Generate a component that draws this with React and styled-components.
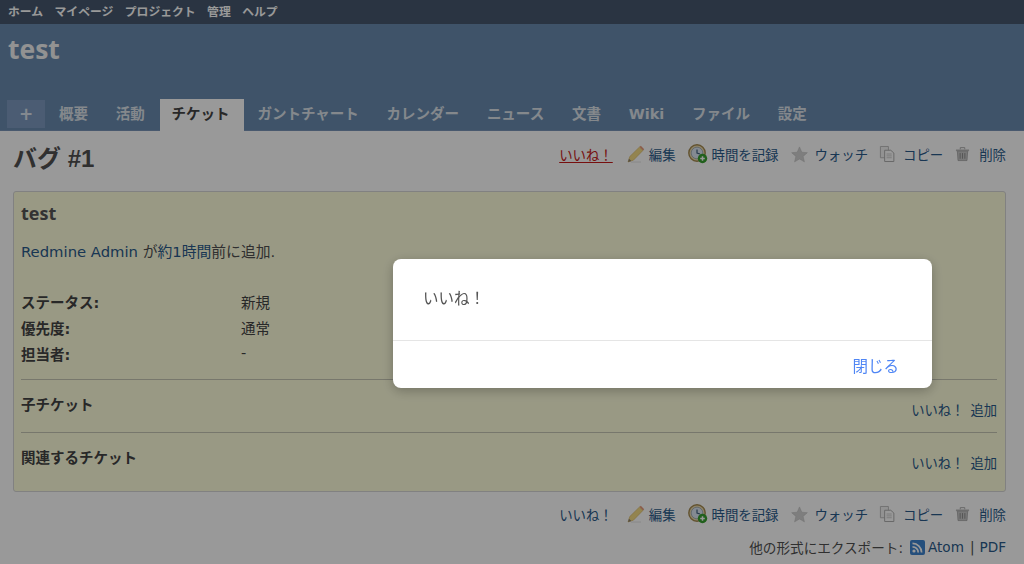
import React from "react";
import styled, { createGlobalStyle } from "styled-components";

const FONT = `"DejaVu Sans", "Noto Sans CJK JP", sans-serif`;

const Global = createGlobalStyle`
  html, body { margin: 0; padding: 0; height: 100%; overflow: hidden; background: #fff; }
  body { font-family: ${FONT}; color: #333; font-size: 13px; }
  * { box-sizing: border-box; }
`;

const Page = styled.div`
  width: 1024px;
  height: 564px;
  overflow: hidden;
  display: flex;
  flex-direction: column;
`;
const TopMenu = styled.nav`
  height: 24px;
  flex: none;
  background: #46586f;
  display: flex;
  align-items: center;
  gap: 11.5px;
  padding: 0 8px 4px;
  font-size: 11.8px;
  font-weight: 700;
  color: #fff;
`;
const Header = styled.header`
  height: 107px;
  flex: none;
  background: #6a8bb0;
  display: flex;
  flex-direction: column;
  justify-content: space-between;
  padding: 9px 0 0 7px;
  box-shadow: inset 0 -1px 0 #7b95b8;
`;
const Title = styled.h1`
  margin: 0 0 0 1px;
  font-family: "Open Sans", sans-serif;
  font-size: 26.5px;
  line-height: 33px;
  font-weight: 700;
  color: #f3f3f3;
`;
const Tabs = styled.div`
  display: flex;
  align-items: flex-end;
  height: 32px;
`;
const PlusTab = styled.div`
  width: 38px;
  height: 28px;
  margin-bottom: 3px;
  background: #7d9ac0;
  color: #dce4ee;
  font-size: 17px;
  font-weight: 700;
  display: flex;
  align-items: center;
  justify-content: center;
`;
const Tab = styled.div`
  height: 32px;
  padding: ${(p) => (p.$active ? "0 14px 2px 12px" : "0 13.9px 2px")};
  margin-left: ${(p) => (p.$active ? "1px" : "0")};
  display: flex;
  align-items: center;
  font-size: 14.5px;
  line-height: 20px;
  font-weight: 700;
  background: ${(p) => (p.$active ? "#fff" : "transparent")};
  color: ${(p) => (p.$active ? "#444" : "#dde3ea")};
`;
const Content = styled.main`
  flex: 1;
  min-height: 0;
  padding: 0 18px 0 13px;
  background: #fff;
`;
const TitleRow = styled.div`
  height: 60px;
  display: flex;
  justify-content: space-between;
  align-items: flex-start;
  padding-top: 11px;
`;
const Heading = styled.h2`
  margin: 2px 0 0;
  font-size: 24px;
  line-height: 30px;
  font-weight: 700;
  color: #505050;
  font-family: "Liberation Sans", "Noto Sans CJK JP", sans-serif;
`;
const Actions = styled.div`
  display: flex;
  align-items: center;
  height: 24px;
  font-size: 13.4px;
  color: #2a5a8a;
`;
const Action = styled.span`
  display: inline-flex;
  align-items: center;
  margin-left: ${(p) => p.$gap}px;
  white-space: nowrap;
  svg { margin-right: ${(p) => p.$icon}px; flex: none; }
`;
const Like = styled.span`
  color: ${(p) => (p.$on ? "#c61a1a" : "#2a5a8a")};
  text-decoration: ${(p) => (p.$on ? "underline" : "none")};
  text-underline-offset: 2px;
`;
const Issue = styled.section`
  height: 301px;
  background: #ffd;
  border: 1px solid #d7d7d7;
  border-radius: 3px;
  padding: 0 8px 0 7px;
  display: flex;
  flex-direction: column;
`;
const Subject = styled.h3`
  margin: 9px 0 0;
  font-family: "Open Sans", sans-serif;
  font-size: 18px;
  line-height: 24px;
  font-weight: 700;
  color: #555;
`;
const Author = styled.p`
  margin: 15px 0 0;
  line-height: 24px;
  font-size: 14.8px;
  color: #505050;
`;
const Link = styled.a`
  color: #2a5a8a;
`;
const Attrs = styled.dl`
  margin: 24px 0 0;
  display: grid;
  grid-template-columns: 220px 1fr;
  grid-auto-rows: 26px;
  align-items: center;
  font-size: 14.5px;
  padding-bottom: 13px;
  dt { font-weight: 700; color: #444; }
  dd { margin: 0; color: #444; }
`;
const Sub = styled.div`
  border-top: 1px solid #c6c6b4;
  height: 53px;
  display: flex;
  justify-content: space-between;
  padding-top: 14px;
`;
const SubTitle = styled.strong`
  font-size: 14.5px;
  line-height: 22px;
  color: #444;
`;
const SubLinks = styled.span`
  display: flex;
  gap: 6px;
  margin-top: 7px;
  line-height: 20px;
  color: #2a5a8a;
  font-size: 13.3px;
`;
const BottomActions = styled.div`
  margin-top: 10px;
  display: flex;
  justify-content: flex-end;
`;
const Export = styled.div`
  margin-top: 11px;
  display: flex;
  justify-content: flex-end;
  align-items: center;
  font-size: 13.6px;
  color: #505050;
  white-space: nowrap;
  svg { margin: 0 3px 0 7px; }
`;
const Blue = styled.span`
  color: #2a5a8a;
`;
const Sep = styled.span`
  margin: 0 5px 0 6px;
  color: #505050;
`;
const Overlay = styled.div`
  position: fixed;
  inset: 0;
  background: rgba(0, 0, 0, 0.4);
  z-index: 10;
`;
const Modal = styled.div`
  position: fixed;
  z-index: 11;
  left: 393px;
  top: 259px;
  width: 539px;
  height: 129px;
  background: #fff;
  border-radius: 8px;
  box-shadow: 0 3px 12px rgba(0, 0, 0, 0.25);
  display: flex;
  flex-direction: column;
`;
const ModalBody = styled.div`
  height: 82px;
  padding: 28px 30px 0;
  font-size: 15.5px;
  line-height: 20px;
  color: #555;
  border-bottom: 1px solid #e5e5e5;
  font-family: "Noto Sans CJK JP", sans-serif;
`;
const ModalFoot = styled.div`
  flex: 1;
  display: flex;
  justify-content: flex-end;
  align-items: center;
  padding: 0 33px 0 0;
  font-size: 15.5px;
  color: #4f86f5;
  font-family: "Noto Sans CJK JP", sans-serif;
`;

const Pencil = () => (
  <svg width="18" height="18" viewBox="0 0 18 18">
    <path d="M1 17 L2.8 11.5 L12.5 2 L16 5.4 L6.4 15.2 Z" fill="#f6dc84" stroke="#d8b765" strokeWidth=".6" />
    <path d="M12.5 2 L13.8 .8 L17.2 4.2 L16 5.4 Z" fill="#e79a78" />
    <path d="M1 17 L2 13.7 L4.4 15.9 Z" fill="#8a8170" />
    <path d="M4 17 H14" stroke="#e4e4e4" strokeWidth="1" />
  </svg>
);
const Clock = () => (
  <svg width="20" height="20" viewBox="0 0 20 20">
    <circle cx="9" cy="9" r="8.2" fill="#e9d9ad" stroke="#a58a50" strokeWidth="1.4" />
    <circle cx="9" cy="9" r="5.8" fill="#dce7f3" stroke="#7d93ab" strokeWidth=".6" />
    <path d="M9 5.5 V9 L12 10" fill="none" stroke="#406080" strokeWidth="1.2" />
    <circle cx="14.5" cy="14.5" r="4.7" fill="#37a02f" />
    <path d="M12.2 14.5 H16.8 M14.5 12.2 V16.8" stroke="#fff" strokeWidth="1.5" />
  </svg>
);
const Star = () => (
  <svg width="17" height="17" viewBox="0 0 18 18">
    <path d="M9 1 L11.4 6.6 L17.3 7.1 L12.8 11 L14.2 16.8 L9 13.7 L3.8 16.8 L5.2 11 L.7 7.1 L6.6 6.6 Z" fill="#d2d2d2" stroke="#c0c0c0" strokeWidth=".6" />
  </svg>
);
const Copy = () => (
  <svg width="16" height="18" viewBox="0 0 17 18">
    <path d="M1.5 1 H10 V13 H1.5 Z" fill="#f4f4f4" stroke="#bbb" />
    <path d="M6 5 H12.5 L15.8 8 V17 H6 Z" fill="#fff" stroke="#aaa" />
    <path d="M8 9 H13.5 M8 11 H13.5 M8 13 H13.5" stroke="#ccc" />
  </svg>
);
const Trash = () => (
  <svg width="15" height="16" viewBox="0 0 16 16">
    <path d="M1 3.2 H15 V5 H1 Z" fill="#bbb" />
    <path d="M5.6 3 V1.2 H10.4 V3" fill="none" stroke="#aaa" />
    <path d="M2.5 5 H13.5 L12.8 15 H3.2 Z" fill="#c8c8c8" stroke="#999" strokeWidth=".7" />
    <path d="M5.5 7 V13 M8 7 V13 M10.5 7 V13" stroke="#8c8c8c" />
  </svg>
);
const Rss = () => (
  <svg width="15" height="15" viewBox="0 0 15 15">
    <rect width="15" height="15" rx="2" fill="#3f84cf" />
    <circle cx="4" cy="11" r="1.6" fill="#fff" />
    <path d="M2.5 6.8 A5.7 5.7 0 0 1 8.2 12.5 M2.5 3.4 A9.1 9.1 0 0 1 11.6 12.5" fill="none" stroke="#fff" strokeWidth="1.7" />
  </svg>
);

const ActionRow = ({ on }) => (
  <Actions>
    <Like $on={on}>いいね！</Like>
    <Action $gap={14} $icon={4}><Pencil />編集</Action>
    <Action $gap={12} $icon={4}><Clock />時間を記録</Action>
    <Action $gap={13} $icon={6}><Star />ウォッチ</Action>
    <Action $gap={11} $icon={8}><Copy />コピー</Action>
    <Action $gap={12} $icon={9}><Trash />削除</Action>
  </Actions>
);

const tabs = ["概要", "活動", "チケット", "ガントチャート", "カレンダー", "ニュース", "文書", "Wiki", "ファイル", "設定"];

export default function App() {
  return (
    <>
      <Global />
      <Page>
        <TopMenu>
          {["ホーム", "マイページ", "プロジェクト", "管理", "ヘルプ"].map((t) => (
            <span key={t}>{t}</span>
          ))}
        </TopMenu>
        <Header>
          <Title>test</Title>
          <Tabs>
            <PlusTab>+</PlusTab>
            {tabs.map((t) => (
              <Tab key={t} $active={t === "チケット"}>{t}</Tab>
            ))}
          </Tabs>
        </Header>
        <Content>
          <TitleRow>
            <Heading>バグ #1</Heading>
            <ActionRow on />
          </TitleRow>
          <Issue>
            <Subject>test</Subject>
            <Author>
              <Link>Redmine Admin</Link> が<Link>約1時間</Link>前に追加.
            </Author>
            <Attrs>
              <dt>ステータス:</dt><dd>新規</dd>
              <dt>優先度:</dt><dd>通常</dd>
              <dt>担当者:</dt><dd>-</dd>
            </Attrs>
            <Sub>
              <SubTitle>子チケット</SubTitle>
              <SubLinks><span>いいね！</span><span>追加</span></SubLinks>
            </Sub>
            <Sub>
              <SubTitle>関連するチケット</SubTitle>
              <SubLinks><span>いいね！</span><span>追加</span></SubLinks>
            </Sub>
          </Issue>
          <BottomActions><ActionRow /></BottomActions>
          <Export>
            他の形式にエクスポート:<Rss /><Blue>Atom</Blue><Sep>|</Sep><Blue>PDF</Blue>
          </Export>
        </Content>
      </Page>
      <Overlay />
      <Modal>
        <ModalBody>いいね！</ModalBody>
        <ModalFoot>閉じる</ModalFoot>
      </Modal>
    </>
  );
}
